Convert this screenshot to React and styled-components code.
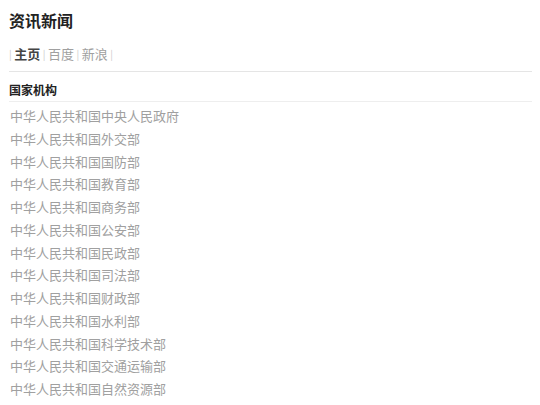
import React from "react";
import styled, { createGlobalStyle } from "styled-components";

const GlobalStyle = createGlobalStyle`
  body {
    margin: 0;
    background: #fff;
    font-family: "Noto Sans CJK SC", "Liberation Sans", sans-serif;
  }
`;

const Page = styled.div`
  padding: 10px 8px 0 9px;
`;

const Title = styled.h3`
  margin: 0;
  font-size: 16px;
  line-height: 20px;
  font-weight: bold;
  color: #222;
`;

const Nav = styled.nav`
  display: flex;
  align-items: center;
  margin-top: 13px;
  height: 20px;
  padding-bottom: 8px;
  border-bottom: 1px solid #e5e5e5;
`;

const Sep = styled.span`
  font-size: 10px;
  color: #ccc;
  margin: 0 2.5px;
  &:first-child {
    margin-left: 0;
  }
`;

const NavLink = styled.a`
  font-size: 13px;
  color: ${(p) => (p.$active ? "#444" : "#a0a0a0")};
  font-weight: ${(p) => (p.$active ? "bold" : "normal")};
  text-decoration: none;
`;

const SectionTitle = styled.h4`
  margin: 8px 0 0;
  font-size: 12px;
  line-height: 20px;
  font-weight: bold;
  color: #222;
  padding-bottom: 1px;
  border-bottom: 1px solid #eee;
`;

const List = styled.ul`
  list-style: none;
  margin: 0;
  padding: 3px 0 0 1px;
`;

const Item = styled.li`
  font-size: 13px;
  line-height: 22.75px;
  color: #a0a0a0;
`;

const links = [
  { name: "主页", active: true },
  { name: "百度" },
  { name: "新浪" },
];

const agencies = [
  "中华人民共和国中央人民政府",
  "中华人民共和国外交部",
  "中华人民共和国国防部",
  "中华人民共和国教育部",
  "中华人民共和国商务部",
  "中华人民共和国公安部",
  "中华人民共和国民政部",
  "中华人民共和国司法部",
  "中华人民共和国财政部",
  "中华人民共和国水利部",
  "中华人民共和国科学技术部",
  "中华人民共和国交通运输部",
  "中华人民共和国自然资源部",
];

const App = () => {
  return (
    <Page>
      <GlobalStyle />
      <Title>资讯新闻</Title>
      <Nav>
        <Sep>|</Sep>
        {links.map((l) => (
          <React.Fragment key={l.name}>
            <NavLink href="#" $active={l.active}>
              {l.name}
            </NavLink>
            <Sep>|</Sep>
          </React.Fragment>
        ))}
      </Nav>
      <SectionTitle>国家机构</SectionTitle>
      <List>
        {agencies.map((a) => (
          <Item key={a}>{a}</Item>
        ))}
      </List>
    </Page>
  );
};

export default App;
